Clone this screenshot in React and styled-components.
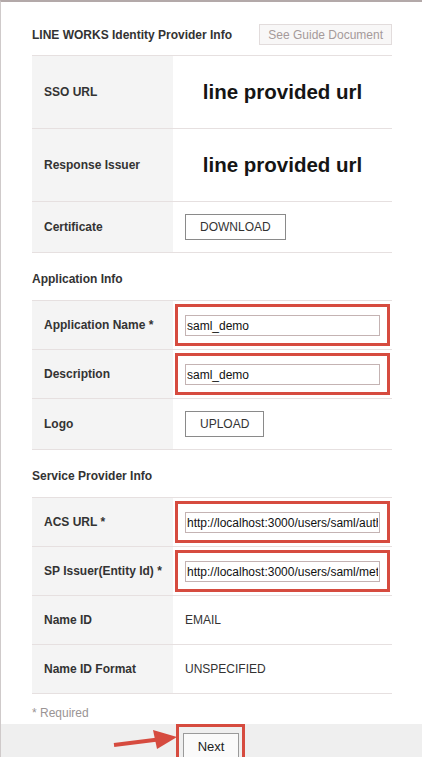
import React from "react";
import styled, { createGlobalStyle } from "styled-components";

const GlobalStyle = createGlobalStyle`
  html, body {
    margin: 0;
    background: #fff;
    font-family: "Liberation Sans", Arial, sans-serif;
  }
`;

const Page = styled.div`
  border-top: 2px solid #b3a9a9;
  border-left: 1px solid #cfcaca;
  height: 755px;
  overflow: hidden;
  display: flex;
  flex-direction: column;
`;

const Content = styled.div`
  padding: 0 30px 0 31px;
`;

const Header = styled.div`
  display: flex;
  justify-content: space-between;
  align-items: center;
  padding-top: 22px;
  height: 21px;
  margin-bottom: 10px;
`;

const Title = styled.h2`
  margin: 0;
  font-size: 12px;
  font-weight: bold;
  color: #333;
`;

const GuideButton = styled.button`
  height: 21px;
  padding: 0 8px;
  border: 1px solid #e2dcdc;
  background: #f8f7f7;
  color: #a59a9a;
  font-family: inherit;
  font-size: 12px;
`;

const SectionTitle = styled.h3`
  margin: 0;
  padding: 19px 0 14px;
  font-size: 12px;
  line-height: 14px;
  font-weight: bold;
  color: #333;
`;

const Table = styled.div`
  border-bottom: 1px solid #e6e0e0;
`;

const Row = styled.div`
  display: grid;
  grid-template-columns: 141px 1fr;
  height: ${(p) => p.$h || 49}px;
  box-sizing: border-box;
  border-top: 1px solid #e6e0e0;
`;

const Label = styled.div`
  display: flex;
  align-items: center;
  padding-left: 12px;
  background: #f4f4f4;
  font-size: 12px;
  font-weight: bold;
  color: #333;
`;

const Value = styled.div`
  display: flex;
  align-items: center;
  justify-content: ${(p) => (p.$center ? "center" : "flex-start")};
  padding-left: ${(p) => (p.$center ? 0 : p.$tight ? 2 : 12)}px;
  font-size: 12px;
  color: #333;
`;

const BigText = styled.span`
  font-size: 20.5px;
  font-weight: bold;
  color: #151515;
`;

const PlainButton = styled.button`
  height: 26px;
  padding: 0 ${(p) => p.$pad || 14}px;
  border: 1px solid #8a8a8a;
  background: #fff;
  font-family: inherit;
  font-size: 12px;
  color: #333;
`;

const Highlight = styled.div`
  border: 3px solid #d64b3f;
  padding: ${(p) => p.$pad || "8px 7px 7px 7px"};
  box-sizing: border-box;
`;

const TextInput = styled.input`
  display: block;
  width: 195px;
  height: 21px;
  box-sizing: border-box;
  padding: 0 1px;
  border: 1px solid #c4b3b3;
  background: #fff;
  font-family: inherit;
  font-size: 12px;
  color: #111;
  outline: none;
`;

const Required = styled.div`
  margin-top: 12px;
  font-size: 12px;
  line-height: 14px;
  color: #9a9494;
`;

const Footer = styled.div`
  position: relative;
  flex: 1;
  margin-top: 4px;
  background: #efefef;
  display: flex;
  justify-content: center;
  padding-right: 2px;
`;

const NextButton = styled.button`
  width: 56px;
  height: 26px;
  border: 1px solid #9a9a9a;
  background: #fafafa;
  font-family: inherit;
  font-size: 13px;
  color: #222;
`;

const Arrow = styled.svg`
  position: absolute;
  left: 111px;
  top: 4px;
`;

const Field = ({ value }) => (
  <Highlight>
    <TextInput defaultValue={value} readOnly />
  </Highlight>
);

export default function App() {
  return (
    <>
      <GlobalStyle />
      <Page>
        <Content>
          <Header>
            <Title>LINE WORKS Identity Provider Info</Title>
            <GuideButton>See Guide Document</GuideButton>
          </Header>
          <Table>
            <Row $h={73}>
              <Label>SSO URL</Label>
              <Value $center>
                <BigText>line provided url</BigText>
              </Value>
            </Row>
            <Row $h={73}>
              <Label>Response Issuer</Label>
              <Value $center>
                <BigText>line provided url</BigText>
              </Value>
            </Row>
            <Row $h={51}>
              <Label>Certificate</Label>
              <Value>
                <PlainButton $pad={14}>DOWNLOAD</PlainButton>
              </Value>
            </Row>
          </Table>

          <SectionTitle>Application Info</SectionTitle>
          <Table>
            <Row>
              <Label>Application Name *</Label>
              <Value $tight>
                <Field value="saml_demo" />
              </Value>
            </Row>
            <Row>
              <Label>Description</Label>
              <Value $tight>
                <Field value="saml_demo" />
              </Value>
            </Row>
            <Row $h={51}>
              <Label>Logo</Label>
              <Value>
                <PlainButton $pad={14}>UPLOAD</PlainButton>
              </Value>
            </Row>
          </Table>

          <SectionTitle>Service Provider Info</SectionTitle>
          <Table>
            <Row>
              <Label>ACS URL *</Label>
              <Value $tight>
                <Field value="http://localhost:3000/users/saml/auth" />
              </Value>
            </Row>
            <Row>
              <Label>SP Issuer(Entity Id) *</Label>
              <Value $tight>
                <Field value="http://localhost:3000/users/saml/metadata" />
              </Value>
            </Row>
            <Row>
              <Label>Name ID</Label>
              <Value>EMAIL</Value>
            </Row>
            <Row>
              <Label>Name ID Format</Label>
              <Value>UNSPECIFIED</Value>
            </Row>
          </Table>
          <Required>* Required</Required>
        </Content>

        <Footer>
          <Arrow width="68" height="24" viewBox="0 0 68 24">
            <line x1="2" y1="17" x2="46" y2="11.5" stroke="#d64b3f" strokeWidth="4" />
            <polygon points="41,2 65,9 45,21" fill="#d64b3f" />
          </Arrow>
          <Highlight $pad="6px 3px 0 4px">
            <NextButton>Next</NextButton>
          </Highlight>
        </Footer>
      </Page>
    </>
  );
}
